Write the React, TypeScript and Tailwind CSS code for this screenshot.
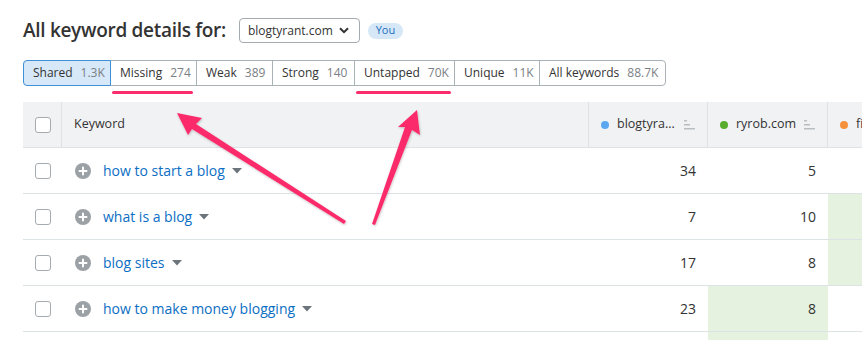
import React from 'react';

type Tab = { label: string; count: string; w: string; active?: boolean };

const tabs: Tab[] = [
  { label: 'Shared', count: '1.3K', w: 'w-[88px]', active: true },
  { label: 'Missing', count: '274', w: 'w-[87px]' },
  { label: 'Weak', count: '389', w: 'w-[77px]' },
  { label: 'Strong', count: '140', w: 'w-[83px]' },
  { label: 'Untapped', count: '70K', w: 'w-[101px]' },
  { label: 'Unique', count: '11K', w: 'w-[86px]' },
  { label: 'All keywords', count: '88.7K', w: 'w-[127px]' },
];

type Row = { keyword: string; a: number; b: number; bGreen?: boolean; cGreen?: boolean };

const rows: Row[] = [
  { keyword: 'how to start a blog', a: 34, b: 5 },
  { keyword: 'what is a blog', a: 7, b: 10, cGreen: true },
  { keyword: 'blog sites', a: 17, b: 8, cGreen: true },
  { keyword: 'how to make money blogging', a: 23, b: 8, bGreen: true },
];

const Checkbox = () => (
  <span className="block w-4 h-4 rounded-[3px] border border-[#a6abb0] bg-white" />
);

const SortIcon = () => (
  <svg width="11" height="10" viewBox="0 0 11 10" className="shrink-0">
    <rect x="0" y="0" width="3" height="1.5" fill="#b9bec2" />
    <rect x="0" y="4" width="6" height="1.5" fill="#b9bec2" />
    <rect x="0" y="8" width="11" height="1.5" fill="#b9bec2" />
  </svg>
);

const Caret = () => (
  <svg width="10" height="6" viewBox="0 0 10 6" className="shrink-0">
    <path d="M0 0h10L5 5.5z" fill="#6c757b" />
  </svg>
);

const PlusCircle = () => (
  <svg width="16" height="16" viewBox="0 0 16 16" className="shrink-0">
    <circle cx="8" cy="8" r="8" fill="#9ca1a6" />
    <path d="M8 4.5v7M4.5 8h7" stroke="#fff" strokeWidth="2" strokeLinecap="round" />
  </svg>
);

const Arrows = () => (
  <svg width="862" height="340" viewBox="0 0 862 340" className="absolute left-0 top-0 pointer-events-none">
    <defs>
      <filter id="sh" x="-10%" y="-10%" width="120%" height="120%">
        <feDropShadow dx="0.5" dy="1" stdDeviation="0.8" floodColor="#000" floodOpacity="0.25" />
      </filter>
    </defs>
    <g fill="#fb2c6b" filter="url(#sh)">
      {/* left arrow */}
      <path d="M177 113 L202 118 L196 124 L346 221 L344 224 L192 129 L188 135 Z" />
      {/* right arrow */}
      <path d="M417 110 L420 135 L412 130 L375 225 L372 224 L405 127 L398 127 Z" />
    </g>
  </svg>
);

export default function App() {
  return (
    <div className="relative w-[862px] h-[340px] overflow-hidden bg-white text-[#333] font-['Open_Sans',sans-serif]">
      <div className="pl-[23px] pt-[18px]">
        <div className="flex items-center h-[25px]">
          <h1 className="text-[19px] font-semibold tracking-[-0.3px] leading-none">All keyword details for:</h1>
          <button className="ml-[13px] flex items-center h-[25px] w-[121px] pl-[8px] pr-[10px] justify-between rounded-[4px] border border-[#a3abb0] text-[12px]">
            <span>blogtyrant.com</span>
            <svg width="10" height="7" viewBox="0 0 10 7">
              <path d="M1 1.2l4 4 4-4" stroke="#333" strokeWidth="2" fill="none" />
            </svg>
          </button>
          <span className="ml-[8px] h-[16px] w-[35px] rounded-full bg-[#d6e8f7] text-[#1c6fc0] text-[11px] flex items-center justify-center">
            You
          </span>
        </div>

        <div className="mt-[17px] flex">
          {tabs.map((t, i) => (
            <div
              key={t.label}
              className={
                'relative h-[26px] flex items-center gap-[8px] pl-[9px] text-[12px] border shrink-0 ' +
                t.w +
                ' ' +
                (t.active
                  ? 'bg-[#d7e8f8] border-[#3f8fd6] rounded-l-[4px] z-10'
                  : 'border-[#a9b2b7] -ml-px ' + (i === tabs.length - 1 ? 'rounded-r-[4px]' : ''))
              }
            >
              <span className="text-[#333]">{t.label}</span>
              <span className="text-[#7a8085]">{t.count}</span>
              {(t.label === 'Missing' || t.label === 'Untapped') && (
                <span className="absolute left-[1px] right-[3px] top-[30px] h-[3px] rounded-full bg-[#fb2c6b]" />
              )}
            </div>
          ))}
        </div>

        <div className="mt-[16px] w-[900px]">
          <div className="grid grid-cols-[39px_527px_119px_120px_120px] h-[46px] bg-[#f1f2f4] border-b border-[#dde2e5] text-[12.5px]">
            <div className="flex items-center pl-[12px] border-r border-[#dde2e5]">
              <Checkbox />
            </div>
            <div className="flex items-center pl-[12px] border-r border-[#dde2e5]">Keyword</div>
            <div className="flex items-center pl-[12px] pr-[12px] gap-[8px] border-r border-[#dde2e5]">
              <span className="w-[8px] h-[8px] rounded-full bg-[#5ba8f0] shrink-0" />
              <span className="flex-1">blogtyra...</span>
              <SortIcon />
            </div>
            <div className="flex items-center pl-[12px] pr-[12px] gap-[8px] border-r border-[#dde2e5]">
              <span className="w-[8px] h-[8px] rounded-full bg-[#58ac2e] shrink-0" />
              <span className="flex-1">ryrob.com</span>
              <SortIcon />
            </div>
            <div className="flex items-center pl-[12px] pr-[12px] gap-[8px]">
              <span className="w-[8px] h-[8px] rounded-full bg-[#f5913d] shrink-0" />
              <span className="flex-1">fizzle.co</span>
            </div>
          </div>

          {rows.map((r) => (
            <div
              key={r.keyword}
              className="grid grid-cols-[39px_527px_119px_120px_120px] h-[46px] border-b border-[#dde2e5] text-[14px]"
            >
              <div className="flex items-center pl-[12px]">
                <Checkbox />
              </div>
              <div className="flex items-center pl-[13px] gap-[12px]">
                <PlusCircle />
                <span className="flex items-center gap-[7px]">
                  <span className="text-[#0b6ec3]">{r.keyword}</span>
                  <Caret />
                </span>
              </div>
              <div className="flex items-center justify-end pr-[12px]">{r.a}</div>
              <div className={'flex items-center justify-end pr-[12px] ' + (r.bGreen ? 'bg-[#e5f2df]' : '')}>{r.b}</div>
              <div className={r.cGreen ? 'bg-[#e5f2df]' : ''} />
            </div>
          ))}
          <div className="grid grid-cols-[39px_527px_119px_120px_120px] h-[46px]">
            <div />
            <div />
            <div />
            <div className="bg-[#e5f2df]" />
            <div />
          </div>
        </div>
      </div>
      <Arrows />
    </div>
  );
}
